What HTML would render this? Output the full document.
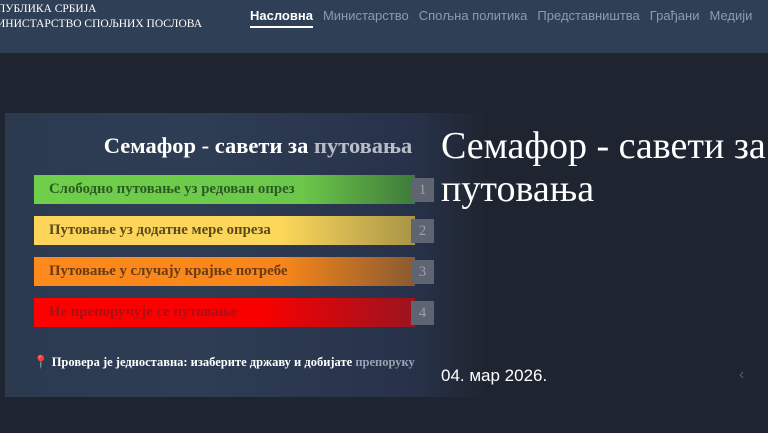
<!DOCTYPE html>
<html><head><meta charset="utf-8"><style>
*{margin:0;padding:0;box-sizing:border-box}
body{width:768px;height:433px;overflow:hidden;background:#1f2530;font-family:"Liberation Sans","DejaVu Sans",sans-serif;position:relative}
.hdr{position:absolute;left:0;top:0;width:768px;height:53px;background:#2f3f56}
.brand{position:absolute;left:-3px;top:2px;color:#fff;font-family:"Liberation Serif",serif;font-size:11.5px;line-height:15px}
.nav{position:absolute;top:8px;left:250px;font-size:13px;color:#8d9bb0;white-space:nowrap}
.nav span{margin-right:10px}
.nav .a{color:#fff;font-weight:bold;display:inline-block;border-bottom:2px solid #fff;padding-bottom:3px}
.card{position:absolute;left:5px;top:113px;width:480px;height:284px;background:linear-gradient(90deg,#2c3a50 0%,#2e3d54 40%,#27324a 85%,#1f2530 100%)}
.ct{position:absolute;left:0;width:506px;top:20px;text-align:center;color:#fff;font-family:"Liberation Serif",serif;font-weight:bold;font-size:22.5px}
.bar{position:absolute;left:29px;width:381px;height:29px;font-family:"Liberation Serif",serif;font-weight:bold;font-size:14.8px;line-height:29px;padding-left:15px;white-space:nowrap}
.num{position:absolute;left:406px;width:23px;height:24px;background:#5e6470;color:#9aa0aa;font-family:"Liberation Serif",serif;font-size:15px;text-align:center;line-height:24px}
.foot{position:absolute;left:28px;top:242px;color:#fff;font-family:"Liberation Serif",serif;font-weight:bold;font-size:12.5px;white-space:nowrap}
.title{position:absolute;left:441px;top:125px;color:#fff;font-family:"Liberation Serif",serif;font-size:38px;line-height:43px;white-space:nowrap}
.date{position:absolute;left:441px;top:366px;color:#fff;font-size:17px}
.arr{position:absolute;left:739px;top:366px;color:#555e6c;font-size:16px}
</style></head><body>
<div class="hdr">
<div class="brand">ПУБЛИКА СРБИЈА<br>ИНИСТАРСТВО СПОЉНИХ ПОСЛОВА</div>
<div class="nav"><span class="a">Насловна</span><span>Министарство</span><span>Спољна политика</span><span>Представништва</span><span>Грађани</span><span>Медији</span></div>
</div>
<div class="card">
<div class="ct">Семафор - савети за <span style="color:#b8bec8">путовања</span></div>
<div class="bar" style="top:62px;background:linear-gradient(90deg,#6fcf4a 0%,#6cc84a 70%,#3f7a3a 100%);color:#2a5a24">Слободно путовање уз редован опрез</div>
<div class="num" style="top:65px">1</div>
<div class="bar" style="top:103px;background:linear-gradient(90deg,#fdd55a 0%,#fbd75a 65%,#a89448 100%);color:#5a4a1c">Путовање уз додатне мере опреза</div>
<div class="num" style="top:106px">2</div>
<div class="bar" style="top:144px;background:linear-gradient(90deg,#fd8a1a 0%,#f8861a 65%,#8a5a30 100%);color:#6a3a12">Путовање у случају крајње потребе</div>
<div class="num" style="top:147px">3</div>
<div class="bar" style="top:185px;background:linear-gradient(90deg,#ff0000 0%,#f80000 60%,#9a1420 100%);color:#a8101a">Не препоручује се путовање</div>
<div class="num" style="top:188px">4</div>
<div class="foot"><span style="color:#e0406a">📍</span> Провера је једноставна: изаберите државу и добијате <span style="color:#9aa2b0">препоруку</span></div>
</div>
<div class="title">Семафор - савети за<br>путовања</div>
<div class="date">04. мар 2026.</div>
<div class="arr">‹</div>
</body></html>
